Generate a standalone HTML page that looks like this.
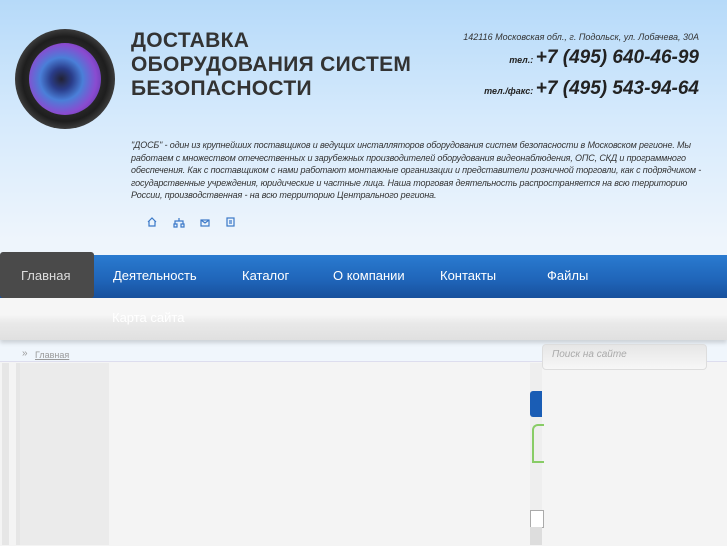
<!DOCTYPE html>
<html><head><meta charset="utf-8"><style>
body{margin:0;width:727px;height:545px;overflow:hidden;position:relative;font-family:"Liberation Sans",sans-serif;background:linear-gradient(#b6daf9 0,#d6eafc 120px,#eef5fc 240px,#f0f6fc 360px,#f0f6fc 545px)}
.a{position:absolute}
.title{left:131px;top:29px;font-size:21px;font-weight:bold;color:#333;line-height:24px;letter-spacing:0.3px}
.addr{right:28px;top:32px;font-size:9px;font-style:italic;color:#333}
.ph{right:28px;font-style:italic;font-weight:bold;color:#222;font-size:19px}
.ph small{font-size:9px}
.desc{left:131px;top:139px;width:575px;font-size:9px;font-style:italic;color:#333;line-height:12.5px;letter-spacing:-0.15px}
.nav{left:0;top:255px;width:727px;height:43px;background:linear-gradient(#2a7bd0,#1f64b8 60%,#17509c);}
.nav span{position:absolute;top:13px;color:#fff;font-size:13px}
</style></head><body>
<div class="a" style="left:15px;top:29px;width:100px;height:100px;border-radius:50%;background:radial-gradient(circle,#555 0,#1e1e1e 60%,#3a3a3a 70%,#111 100%)"></div>
<div class="a" style="left:29px;top:43px;width:72px;height:72px;border-radius:50%;background:radial-gradient(circle at 45% 50%,#223 0,#2a3d8a 20%,#4a7fd8 40%,#8a4bd0 65%,#3a2a8a 100%)"></div>
<div class="a title">ДОСТАВКА<br>ОБОРУДОВАНИЯ СИСТЕМ<br>БЕЗОПАСНОСТИ</div>
<div class="a addr">142116 Московская обл., г. Подольск, ул. Лобачева, 30А</div>
<div class="a ph" style="top:47px"><small>тел.: </small>+7 (495) 640-46-99</div>
<div class="a ph" style="top:78px"><small>тел./факс: </small>+7 (495) 543-94-64</div>
<div class="a desc">"ДОСБ" - один из крупнейших поставщиков и ведущих инсталляторов оборудования систем безопасности в Московском регионе. Мы работаем с множеством отечественных и зарубежных производителей оборудования видеонаблюдения, ОПС, СКД и программного обеспечения. Как с поставщиком с нами работают монтажные организации и представители розничной торговли, как с подрядчиком - государственные учреждения, юридические и частные лица. Наша торговая деятельность распространяется на всю территорию России, производственная - на всю территорию Центрального региона.</div>
<svg class="a" style="left:146px;top:215px" width="100" height="14" viewBox="0 0 100 14" fill="none" stroke="#3a78c8" stroke-width="1.2">
<path d="M2 7 L6 3 L10 7 M3 6 V11 H9 V6"/>
<path d="M33 3 V6 M29 9 V6 H37 V9 M28 9 h3 v3 h-3z M35 9 h3 v3 h-3z"/>
<rect x="55" y="5" width="8" height="6"/><path d="M55 5 L59 8 L63 5"/>
<rect x="81" y="3" width="7" height="8"/><path d="M83 6 h3 M83 8 h3"/>
</svg>
<div class="a" style="left:0;top:298px;width:727px;height:42px;background:linear-gradient(#f6f6f6 0,#f6f6f6 40%,#e9e9e9 60%,#e0e0e0 100%);box-shadow:0 3px 4px rgba(0,0,0,.15)"></div>
<div class="a nav">
<span style="left:113px">Деятельность</span><span style="left:242px">Каталог</span><span style="left:333px">О компании</span><span style="left:440px">Контакты</span><span style="left:547px">Файлы</span></div>
<div class="a" style="left:0;top:252px;width:94px;height:46px;background:#4a4a4a;border-radius:3px"><span style="position:absolute;left:21px;top:16px;color:#ddd;font-size:13px">Главная</span></div>
<div class="a" style="left:112px;top:310px;color:#fff;font-size:13px">Карта сайта</div>
<div class="a" style="left:22px;top:348px;color:#999;font-size:10px">»</div>
<div class="a" style="left:35px;top:350px;color:#999;font-size:9px;text-decoration:underline">Главная</div>
<div class="a" style="left:0;top:361px;width:727px;height:184px;background:#f4f4f4;border-top:1px solid #dde"></div>
<div class="a" style="left:2px;top:363px;width:7px;height:182px;background:#e6e6e6"></div>
<div class="a" style="left:16px;top:363px;width:4px;height:182px;background:#e6e6e6"></div>
<div class="a" style="left:20px;top:363px;width:89px;height:182px;background:#ebebeb"></div>
<div class="a" style="left:530px;top:363px;width:12px;height:182px;background:#eee"></div>
<div class="a" style="left:530px;top:391px;width:12px;height:26px;background:#1a5db5;border-radius:3px 0 0 3px"></div>
<div class="a" style="left:532px;top:424px;width:10px;height:35px;border:2px solid #8c6;border-right:0;border-radius:6px 0 0 0"></div>
<div class="a" style="left:530px;top:510px;width:12px;height:16px;background:#fff;border:1px solid #aaa"></div>
<div class="a" style="left:530px;top:527px;width:12px;height:18px;background:#ddd"></div>
<div class="a" style="left:542px;top:344px;width:163px;height:24px;background:linear-gradient(#e6e6e6,#f7f7f7);border:1px solid #ddd;border-radius:4px"><span style="position:absolute;left:9px;top:4px;color:#aaa;font-size:10px;font-style:italic">Поиск на сайте</span></div>
</body></html>
